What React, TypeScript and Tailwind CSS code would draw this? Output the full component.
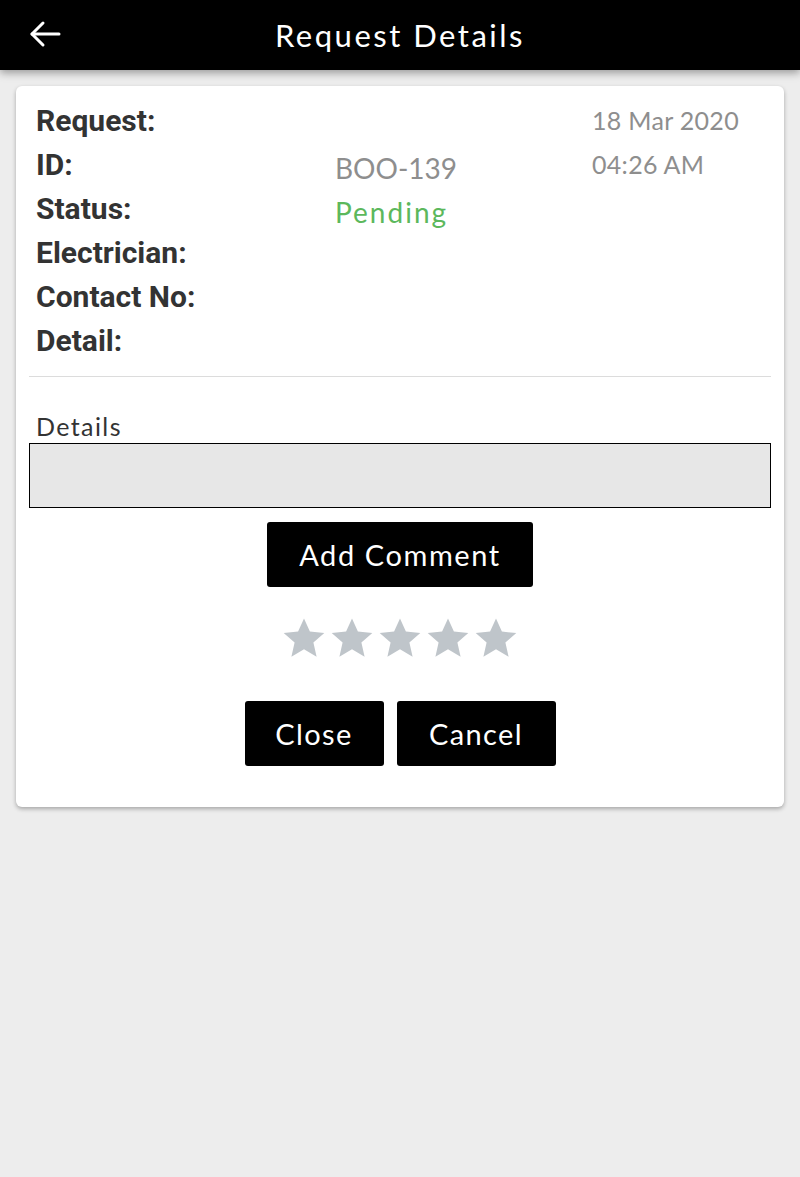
const rows = [
  { label: "Request:", value: "", date: "18 Mar 2020" },
  { label: "ID:", value: "BOO-139", date: "04:26 AM" },
  { label: "Status:", value: "Pending", date: "" },
  { label: "Electrician:", value: "", date: "" },
  { label: "Contact No:", value: "", date: "" },
  { label: "Detail:", value: "", date: "" },
];

function Star() {
  return (
    <svg viewBox="0 0 24 24" className="h-[48px] w-[48px]" fill="#bfc5ca">
      <path d="M12 2.2l2.95 6.6 7.2.7-5.45 4.8 1.6 7.05L12 17.6l-6.3 3.75 1.6-7.05L1.85 9.5l7.2-.7z" />
    </svg>
  );
}

export default function App() {
  return (
    <div className="min-h-[1177px] bg-[#ededed] font-['Lato',sans-serif]">
      <header className="relative flex h-[70px] items-center justify-center bg-black shadow-[0_3px_8px_rgba(0,0,0,0.35)]">
        <svg
          className="absolute left-[28px] top-[19px] h-[30px] w-[34px]"
          viewBox="0 0 34 30"
          fill="none"
          stroke="white"
          strokeWidth={3}
          strokeLinecap="round"
          strokeLinejoin="round"
        >
          <path d="M4 15H31" />
          <path d="M15 4L4 15l11 11" />
        </svg>
        <h1 className="text-[31px] tracking-[2.5px] text-white">Request Details</h1>
      </header>

      <main className="px-4 pt-4">
        <div className="rounded-[6px] bg-white px-[13px] pb-[41px] pt-[12px] shadow-[0_2px_4px_rgba(0,0,0,0.3)]">
          <div className="px-[7px]">
            {rows.map((row) => (
              <div key={row.label} className="flex h-[44px] items-center">
                <div className="w-[299px] font-['Roboto',sans-serif] text-[30px] font-bold text-[#333]">{row.label}</div>
                <div
                  className={`w-[257px] pt-[8px] text-[28px] ${
                    row.value === "Pending" ? "tracking-[2px] text-[#5cb85c]" : "text-[#8e8e8e]"
                  }`}
                >
                  {row.value}
                </div>
                <div className="pt-[1px] text-[25px] tracking-[0.3px] text-[#8e8e8e]">{row.date}</div>
              </div>
            ))}
          </div>

          <div className="mt-[14px] border-t border-[#dcdcdc]" />

          <div className="mt-[34px] px-[7px] text-[25px] leading-[30px] tracking-[1.4px] text-[#333]">Details</div>
          <div className="mt-[2px] h-[65px] border border-black bg-[#e7e7e7]" />

          <div className="mt-[14px] flex justify-center">
            <button className="h-[65px] w-[266px] rounded-[3px] bg-black text-[29px] tracking-[1.6px] text-white">
              Add Comment
            </button>
          </div>

          <div className="mt-[27px] flex justify-center">
            <Star />
            <Star />
            <Star />
            <Star />
            <Star />
          </div>

          <div className="mt-[39px] flex justify-center gap-[13px]">
            <button className="h-[65px] w-[139px] rounded-[3px] bg-black text-[29px] tracking-[1.4px] text-white">
              Close
            </button>
            <button className="h-[65px] w-[159px] rounded-[3px] bg-black text-[29px] tracking-[1.4px] text-white">
              Cancel
            </button>
          </div>
        </div>
      </main>
    </div>
  );
}
